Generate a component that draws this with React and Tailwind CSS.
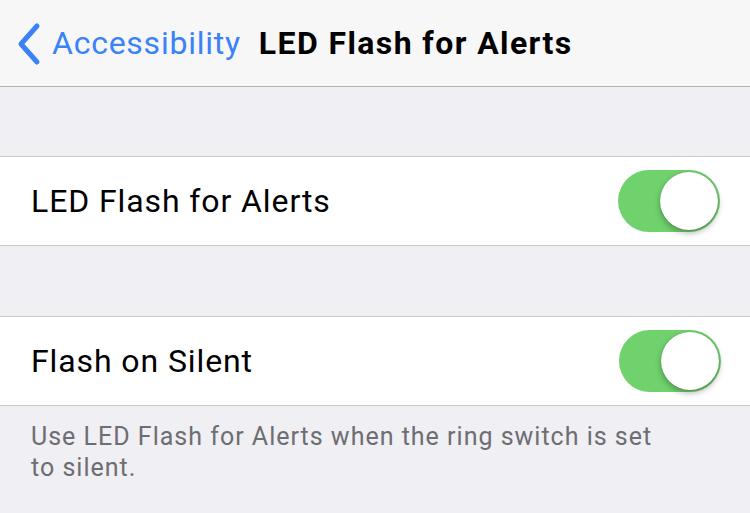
export default function App() {
  const font = { fontFamily: '"Roboto", "Noto Sans", "Liberation Sans", sans-serif' };
  const Toggle = () => (
    <div className="relative w-[102px] h-[62px] rounded-full bg-[#6fd26d]">
      <div className="absolute right-[2px] top-[2px] w-[58px] h-[58px] rounded-full bg-white shadow-[0_3px_6px_rgba(0,0,0,0.3),0_0_1px_rgba(0,0,0,0.3)]" />
    </div>
  );
  return (
    <div className="w-[750px] h-[513px] bg-[#efeff4] overflow-hidden" style={font}>
      <div className="h-[87px] bg-[#f7f7f8] border-b border-[#b2b2b2] flex items-center">
        <svg width="26" height="44" viewBox="0 0 26 44" className="ml-[16px] mt-[1px]">
          <path d="M21 4 L5 22 L21 40" fill="none" stroke="#3a82f7" strokeWidth="5" strokeLinecap="round" strokeLinejoin="round" />
        </svg>
        <span className="ml-[10px] text-[32px] text-[#3a82f7] tracking-[0.75px]">Accessibility</span>
        <span className="ml-[18px] text-[32px] font-bold text-black tracking-[1.4px]">LED Flash for Alerts</span>
      </div>
      <div className="h-[69px]" />
      <div className="h-[90px] bg-white border-y border-[#c8c7cc] flex items-center justify-between pl-[31px] pr-[30px]">
        <span className="text-[32px] text-black tracking-[0.9px]">LED Flash for Alerts</span>
        <Toggle />
      </div>
      <div className="h-[70px]" />
      <div className="h-[90px] bg-white border-y border-[#c8c7cc] flex items-center justify-between pl-[31px] pr-[29px]">
        <span className="text-[32px] text-black tracking-[0.9px]">Flash on Silent</span>
        <Toggle />
      </div>
      <div className="pl-[31px] pt-[15px] text-[25px] leading-[31px] text-[#6d6d72] tracking-[1px] w-[720px]">
        Use LED Flash for Alerts when the ring switch is set<br />to silent.
      </div>
    </div>
  );
}
